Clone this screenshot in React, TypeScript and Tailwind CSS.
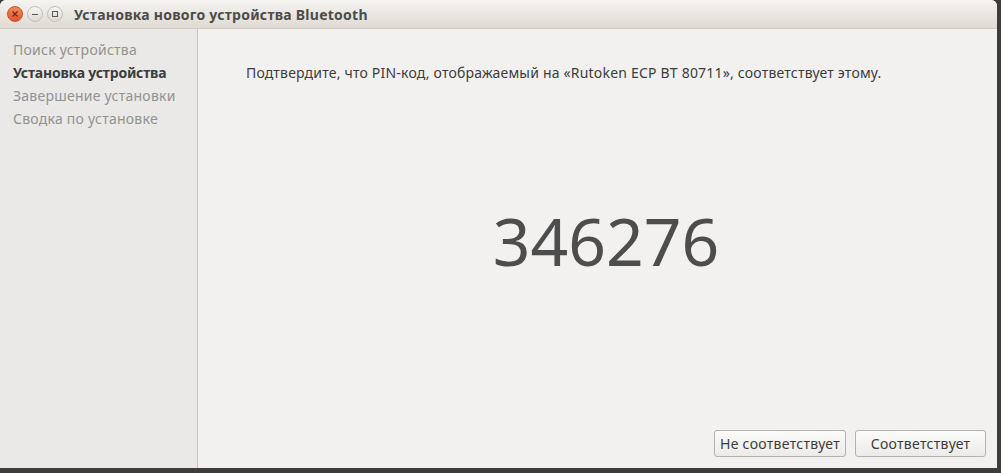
const steps = [
  { label: 'Поиск устройства', active: false },
  { label: 'Установка устройства', active: true },
  { label: 'Завершение установки', active: false },
  { label: 'Сводка по установке', active: false },
]

const font = { fontFamily: '"Noto Sans", "DejaVu Sans", sans-serif' }

const WindowButton = ({ kind }: { kind: 'close' | 'min' | 'max' }) => {
  if (kind === 'close') {
    return (
      <div className="flex h-[16px] w-[16px] items-center justify-center rounded-full border border-[#c8522d] bg-gradient-to-b from-[#f3875c] to-[#e1532b]">
        <svg width="8" height="8" viewBox="0 0 8 8">
          <path d="M1.5 1.5 L6.5 6.5 M6.5 1.5 L1.5 6.5" stroke="#6a2a14" strokeWidth="1.2" />
        </svg>
      </div>
    )
  }
  return (
    <div className="flex h-[16px] w-[16px] items-center justify-center rounded-full border border-[#c3beb6] bg-gradient-to-b from-[#f6f5f2] to-[#dedad3]">
      <svg width="8" height="8" viewBox="0 0 8 8">
        {kind === 'min' ? (
          <path d="M1 4.5 H7" stroke="#5c5a56" strokeWidth="1" />
        ) : (
          <rect x="1.5" y="1.5" width="5" height="5" fill="none" stroke="#5c5a56" strokeWidth="1" />
        )}
      </svg>
    </div>
  )
}

export default function App() {
  return (
    <div className="h-[473px] w-[1001px] overflow-hidden bg-[#3d3d3b]" style={font}>
      <div className="flex h-[468px] w-[997px] flex-col overflow-hidden rounded-t-[6px] bg-[#f2f1f0]">
        <div className="flex h-[29px] shrink-0 items-center border-b border-[#d1cbc2] bg-gradient-to-b from-[#f5f4f1] to-[#dfdad3] pl-[7px]">
          <div className="flex items-center gap-[4px]">
            <WindowButton kind="close" />
            <WindowButton kind="min" />
            <WindowButton kind="max" />
          </div>
          <div className="ml-[11px] text-[14px] font-bold tracking-[0.25px] text-[#4c4c4b]">
            Установка нового устройства Bluetooth
          </div>
        </div>
        <div className="flex flex-1">
          <aside className="w-[198px] shrink-0 border-r border-[#c9c6c1] bg-[#eae9e7] pl-[13px] pt-[9px]">
            {steps.map((s) => (
              <div
                key={s.label}
                className={
                  s.active
                    ? 'h-[23px] text-[14px] leading-[23px] font-bold tracking-[-0.2px] text-[#3c3c3c]'
                    : 'h-[23px] text-[14px] leading-[23px] tracking-[0.25px] text-[#939290]'
                }
              >
                {s.label}
              </div>
            ))}
          </aside>
          <main className="flex flex-1 flex-col">
            <p className="ml-[48px] mt-[35px] text-[14px] leading-[18px] tracking-[0.2px] text-[#3c3c3c]">
              Подтвердите, что PIN-код, отображаемый на «Rutoken ECP BT 80711», соответствует этому.
            </p>
            <div className="mt-[118px] pl-[17px] text-center text-[66px] leading-[80px] text-[#4d4d4d]">
              346276
            </div>
            <div className="mt-auto mb-[11px] mr-[11px] flex justify-end gap-[9px]">
              <button className="h-[27px] w-[132px] rounded-[3px] border border-[#b6b2ab] bg-gradient-to-b from-[#fbfbfa] to-[#ecebe9] text-[14px] tracking-[0.3px] text-[#3c3c3c]">
                Не соответствует
              </button>
              <button className="h-[27px] w-[131px] rounded-[3px] border border-[#b6b2ab] bg-gradient-to-b from-[#fbfbfa] to-[#ecebe9] text-[14px] tracking-[0.3px] text-[#3c3c3c]">
                Соответствует
              </button>
            </div>
          </main>
        </div>
      </div>
    </div>
  )
}
